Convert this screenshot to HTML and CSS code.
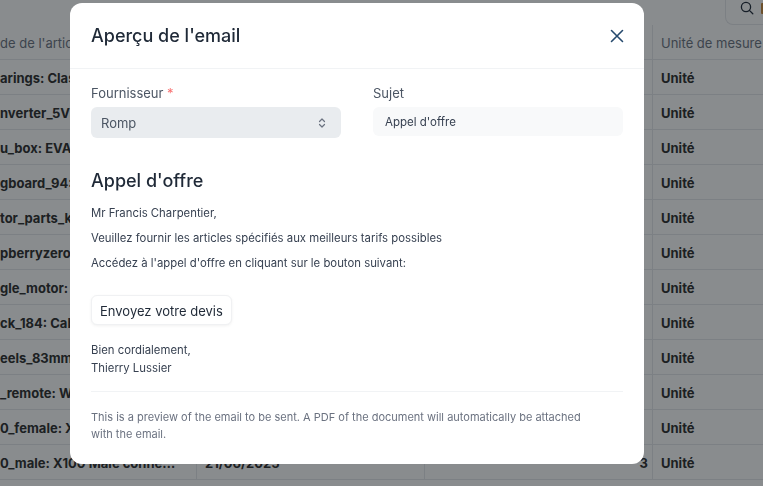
FILE: index.html
```html
<!DOCTYPE html>
<html lang="fr">
<head>
<meta charset="utf-8">
<title>Aperçu de l'email</title>
<link rel="stylesheet" href="styles.css">
</head>
<body>
<div class="page">
  <div class="topbar">
    <div class="search">
      <svg class="search-icon" width="14" height="14" viewBox="0 0 14 14"><circle cx="6" cy="6" r="4.6" fill="none" stroke="#1f2937" stroke-width="1.3"/><line x1="9.4" y1="9.4" x2="12.8" y2="12.8" stroke="#1f2937" stroke-width="1.3" stroke-linecap="round"/></svg>
      <span class="search-mark"></span>
    </div>
  </div>
  <div class="table">
    <div class="row head"><div class="c1"><span class="clip">de de l'article</span></div><div class="c2"></div><div class="c3"></div><div class="c4">Unité de mesure</div></div>
    <div class="row"><div class="c1"><span class="clip">arings: Classic</span></div><div class="c2"></div><div class="c3"></div><div class="c4">Unité</div></div>
    <div class="row"><div class="c1"><span class="clip">nverter_5V: DC</span></div><div class="c2"></div><div class="c3"></div><div class="c4">Unité</div></div>
    <div class="row"><div class="c1"><span class="clip">u_box: EVA foam</span></div><div class="c2"></div><div class="c3"></div><div class="c4">Unité</div></div>
    <div class="row"><div class="c1"><span class="clip">gboard_94: Bread</span></div><div class="c2"></div><div class="c3"></div><div class="c4">Unité</div></div>
    <div class="row"><div class="c1"><span class="clip">tor_parts_kit</span></div><div class="c2"></div><div class="c3"></div><div class="c4">Unité</div></div>
    <div class="row"><div class="c1"><span class="clip">pberryzero: Pi</span></div><div class="c2"></div><div class="c3"></div><div class="c4">Unité</div></div>
    <div class="row"><div class="c1"><span class="clip">gle_motor: Single</span></div><div class="c2"></div><div class="c3"></div><div class="c4">Unité</div></div>
    <div class="row"><div class="c1"><span class="clip">ck_184: Cable</span></div><div class="c2"></div><div class="c3"></div><div class="c4">Unité</div></div>
    <div class="row"><div class="c1"><span class="clip">eels_83mm: Wheels</span></div><div class="c2"></div><div class="c3"></div><div class="c4">Unité</div></div>
    <div class="row"><div class="c1"><span class="clip">_remote: Wireless</span></div><div class="c2"></div><div class="c3"></div><div class="c4">Unité</div></div>
    <div class="row"><div class="c1"><span class="clip">0_female: X100</span></div><div class="c2"></div><div class="c3"></div><div class="c4">Unité</div></div>
    <div class="row"><div class="c1"><span class="full">0_male: X100 Male connector</span></div><div class="c2">21/06/2025</div><div class="c3">3</div><div class="c4">Unité</div></div>
  </div>
</div>

<div class="overlay">
  <div class="modal">
    <div class="modal-header">
      <h2 class="modal-title">Aperçu de l'email</h2>
      <svg class="close" width="14" height="14" viewBox="0 0 14 14"><path d="M1.5 1.5 L12.5 12.5 M12.5 1.5 L1.5 12.5" stroke="#264a6e" stroke-width="1.6" stroke-linecap="round" fill="none"/></svg>
    </div>
    <div class="modal-body">
      <div class="fields">
        <div class="field">
          <div class="label">Fournisseur <span class="req">*</span></div>
          <div class="select">
            <span>Romp</span>
            <svg width="8" height="12" viewBox="0 0 8 12"><path d="M1.5 4.5 L4 2 L6.5 4.5 M1.5 7.5 L4 10 L6.5 7.5" stroke="#6b7280" stroke-width="1.2" fill="none" stroke-linecap="round" stroke-linejoin="round"/></svg>
          </div>
        </div>
        <div class="field">
          <div class="label">Sujet</div>
          <div class="input">Appel d'offre</div>
        </div>
      </div>
      <div class="email">
        <h3 class="email-title">Appel d'offre</h3>
        <p class="p">Mr Francis Charpentier,</p>
        <p class="p">Veuillez fournir les articles spécifiés aux meilleurs tarifs possibles</p>
        <p class="p">Accédez à l'appel d'offre en cliquant sur le bouton suivant:</p>
        <div class="btn">Envoyez votre devis</div>
        <p class="sign">Bien cordialement,<br>Thierry Lussier</p>
      </div>
      <div class="footer">This is a preview of the email to be sent. A PDF of the document will automatically be attached with the email.</div>
    </div>
  </div>
</div>
</body>
</html>
```
FILE: styles.css
```css
* { box-sizing: border-box; }
html, body { margin: 0; padding: 0; }
body {
  width: 763px;
  height: 486px;
  overflow: hidden;
  background: #ffffff;
  font-family: Inter, "Noto Sans", sans-serif;
  color: #1f2937;
}
.page { width: 763px; }
.topbar {
  height: 25px;
  display: flex;
  justify-content: flex-end;
}
.search {
  width: 38px;
  height: 25px;
  border: 1px solid #e5e7eb;
  border-top: 0;
  border-right: 0;
  border-radius: 0 0 0 8px;
  display: flex;
  align-items: flex-start;
  padding: 1px 0 0 14px;
  gap: 7px;
  overflow: hidden;
}
.search-icon { flex: none; }
.search-mark {
  flex: none;
  width: 4px;
  height: 11px;
  margin-top: 2px;
  background: #c98a3e;
  border-radius: 1px 0 0 1px;
}
.table { width: 763px; }
.row {
  display: grid;
  grid-template-columns: 197px 228px 228px 1fr;
  height: 35px;
  border-bottom: 1px solid #e5e7eb;
}
.row > div {
  display: flex;
  align-items: center;
  padding-top: 2px;
  font-size: 13px;
  font-weight: 700;
  color: #2b2b2b;
  white-space: nowrap;
  overflow: hidden;
  border-right: 1px solid #e5e7eb;
}
.row > div:last-child { border-right: 0; }
.c1 { padding-right: 16px; }
.clip { display: block; width: 70px; overflow: hidden; white-space: nowrap; }
.full { display: block; min-width: 0; overflow: hidden; text-overflow: ellipsis; white-space: nowrap; }
.c2 { padding-left: 8px; }
.c3 { justify-content: flex-end; padding-right: 4px; }
.c4 { padding-left: 8px; }
.row.head > div { font-weight: 400; color: #6b7280; }

.overlay {
  position: fixed;
  inset: 0;
  background: rgba(15, 20, 25, 0.49);
}
.modal {
  margin: 3px 0 0 70px;
  width: 574px;
  height: 461px;
  background: #ffffff;
  border-radius: 12px;
  overflow: hidden;
}
.modal-header {
  height: 66px;
  padding: 0 21px;
  display: flex;
  align-items: center;
  justify-content: space-between;
  border-bottom: 1px solid #f1f3f5;
}
.modal-title {
  margin: 0;
  font-size: 18px;
  font-weight: 500;
  color: #1f2937;
}
.close { margin-right: -1px; }
.modal-body { padding: 15px 21px 0; }
.fields {
  display: grid;
  grid-template-columns: 1fr 1fr;
  column-gap: 32px;
}
.label {
  font-size: 13px;
  line-height: 18px;
  color: #4b5563;
  margin-bottom: 5px;
}
.req { color: #f87171; }
.select {
  height: 31px;
  background: #e9ecef;
  border-radius: 6px;
  display: flex;
  align-items: center;
  justify-content: space-between;
  padding: 0 15px 0 10px;
  font-size: 13px;
  color: #4b5563;
}
.input {
  height: 29px;
  background: #f8f9fa;
  border-radius: 6px;
  display: flex;
  align-items: center;
  padding: 0 12px;
  font-size: 11.5px;
  color: #374151;
}
.email { padding-top: 31px; }
.email-title {
  margin: 0 0 11px;
  font-size: 18px;
  line-height: 24px;
  font-weight: 500;
  color: #1f2937;
}
.p {
  margin: 0 0 7px;
  font-size: 11.35px;
  line-height: 18px;
  color: #374151;
}
.btn {
  display: inline-block;
  margin-top: 16px;
  height: 30px;
  line-height: 30px;
  padding: 0 8px;
  border-radius: 6px;
  font-size: 13px;
  color: #1f2937;
  background: #ffffff;
  border: 1px solid #f0f1f3;
  box-shadow: 0 1px 3px rgba(0, 0, 0, 0.06);
}
.sign {
  margin: 17px 0 0;
  font-size: 11.35px;
  line-height: 17.5px;
  color: #374151;
}
.footer {
  margin-top: 14px;
  border-top: 1px solid #f1f3f5;
  padding: 17px 30px 0 0;
  font-size: 11px;
  line-height: 17px;
  color: #6b7280;
}
```
